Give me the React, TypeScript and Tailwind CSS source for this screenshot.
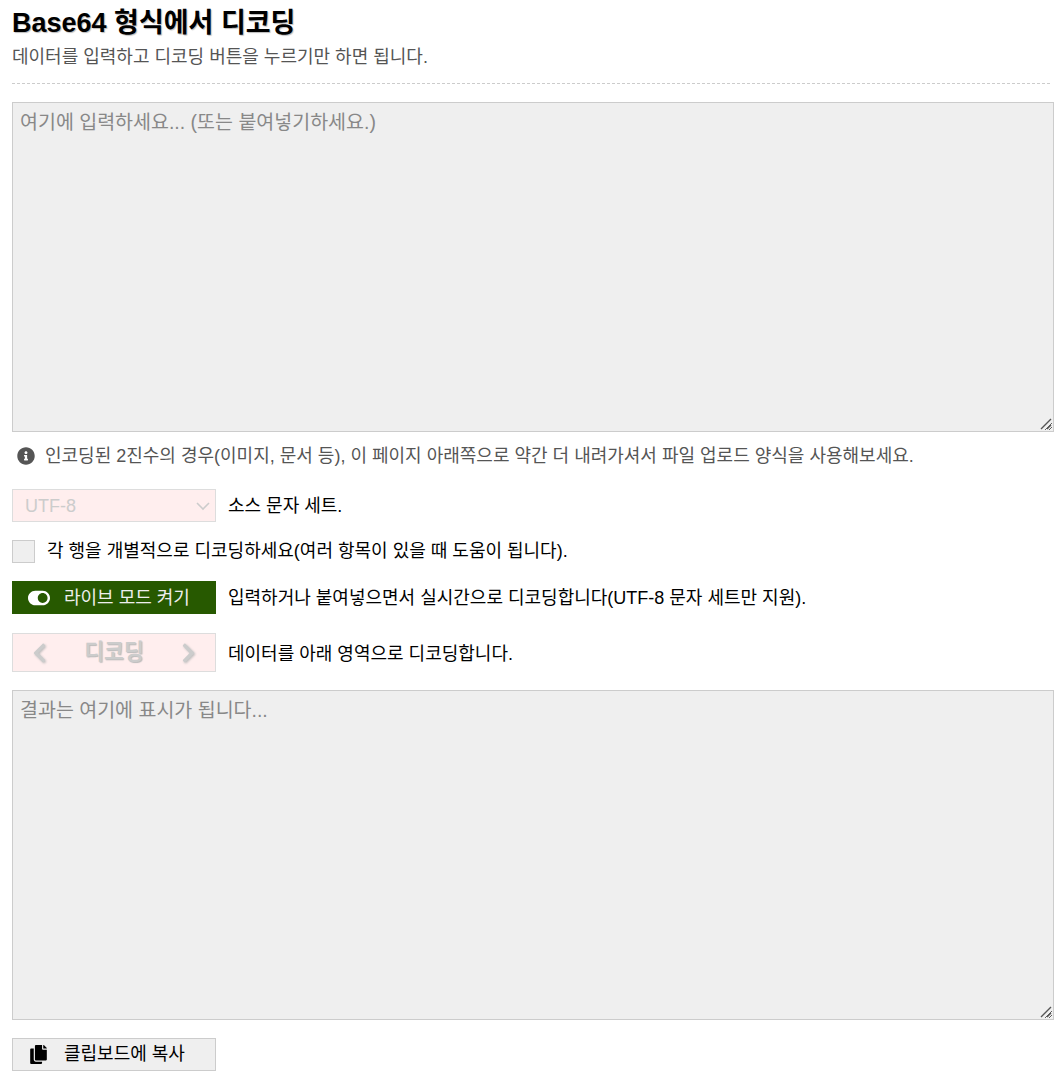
import React from "react";
import { FaChevronLeft, FaChevronRight, FaCopy, FaInfoCircle, FaToggleOn } from "react-icons/fa";

const fontStack = "font-['Liberation_Sans','Noto_Sans_CJK_KR',sans-serif]";

const Field = ({ placeholder }: { placeholder: string }) => (
  <div className="relative mt-[18px] h-[330px] w-[1042px]">
    <textarea
      className="block h-full w-full border border-[#ccc] bg-[#efefef] px-[7px] pt-[6px] pb-[5px] text-[19.5px] leading-[27px] outline-0 placeholder:text-[#888]"
      placeholder={placeholder}
    />
    {/* resize grip, darker than the one the browser draws */}
    <svg
      className="pointer-events-none absolute right-[2px] bottom-[2px] h-[12px] w-[12px] text-[#555]"
      viewBox="0 0 12 12"
      fill="none"
      stroke="currentColor"
      strokeWidth="1.4"
    >
      <path d="M1 11 L11 1 M7 11 L11 7" />
    </svg>
  </div>
);

const App = () => {
  return (
    <div className={`${fontStack} bg-white px-3 text-black`}>
      <h1 className="pt-[6px] text-[27px] leading-[34px] font-bold [text-shadow:1px_1px_1px_#bbb]">
        Base64 형식에서 디코딩
      </h1>
      <p className="mt-[2px] text-[18px] leading-[30px] text-[#555]">
        데이터를 입력하고 디코딩 버튼을 누르기만 하면 됩니다.
      </p>
      <hr className="mt-[11px] border-0 border-t border-dashed border-[#ccc]" />

      <Field placeholder="여기에 입력하세요... (또는 붙여넣기하세요.)" />

      <div className="mt-[12px] flex items-center gap-[10px] pl-[5px] text-[18px] leading-[24px] text-[#555]">
        <FaInfoCircle className="h-[18px] w-[18px] text-[#555]" />
        <span>인코딩된 2진수의 경우(이미지, 문서 등), 이 페이지 아래쪽으로 약간 더 내려가셔서 파일 업로드 양식을 사용해보세요.</span>
      </div>

      <div className="mt-[21px] flex items-center gap-3">
        <div className="relative h-[33px] w-[204px]">
          <select
            disabled
            className="h-full w-full appearance-none border border-[#ddd] bg-[#ffeeee] px-3 pt-[1px] text-[18px] text-[#ccc] outline-0"
          >
            <option>UTF-8</option>
          </select>
          <svg
            className="absolute top-[12px] right-[6px] h-[10px] w-[14px] text-[#ccc]"
            viewBox="0 0 14 10"
            fill="none"
            stroke="currentColor"
            strokeWidth="1.6"
          >
            <path d="M1 2 L7 8 L13 2" />
          </svg>
        </div>
        <span className="text-[18px] leading-[24px]">소스 문자 세트.</span>
      </div>

      <div className="mt-[17px] flex items-center gap-3">
        <input
          type="checkbox"
          className="h-[23px] w-[23px] appearance-none border border-[#ccc] bg-[#efefef]"
        />
        <span className="text-[18px] leading-[24px]">각 행을 개별적으로 디코딩하세요(여러 항목이 있을 때 도움이 됩니다).</span>
      </div>

      <div className="mt-[18px] flex items-center gap-3">
        <button className="flex h-[33px] w-[204px] items-center bg-[#275900] pl-[16px] text-[18px] text-[#eee]">
          <FaToggleOn className="h-[22px] w-[22px] text-white" />
          <span className="ml-[14px] pt-[1px]">라이브 모드 켜기</span>
        </button>
        <span className="pt-[1px] text-[18px] leading-[24px]">입력하거나 붙여넣으면서 실시간으로 디코딩합니다(UTF-8 문자 세트만 지원).</span>
      </div>

      <div className="mt-[19px] flex items-center gap-3">
        <button
          disabled
          className="flex h-[39px] w-[204px] items-center justify-between border border-[#ddd] bg-[#ffeeee] px-[19px] text-[21.5px] font-bold text-[#ccc] [text-shadow:1px_1px_1px_#bbb]"
        >
          <FaChevronLeft className="h-[22px] w-[15px] drop-shadow-[1px_1px_1px_#bbb]" />
          <span>디코딩</span>
          <FaChevronRight className="h-[22px] w-[15px] drop-shadow-[1px_1px_1px_#bbb]" />
        </button>
        <span className="pt-[2px] text-[18px] leading-[24px]">데이터를 아래 영역으로 디코딩합니다.</span>
      </div>

      <Field placeholder="결과는 여기에 표시가 됩니다..." />

      <button className="mt-[18px] mb-4 flex h-[33px] w-[204px] items-center border border-[#ccc] bg-[#efefef] pl-[17px] text-[18px]">
        <FaCopy className="h-[19px] w-[17px]" />
        <span className="ml-[17px]">클립보드에 복사</span>
      </button>
    </div>
  );
};

export default App;
